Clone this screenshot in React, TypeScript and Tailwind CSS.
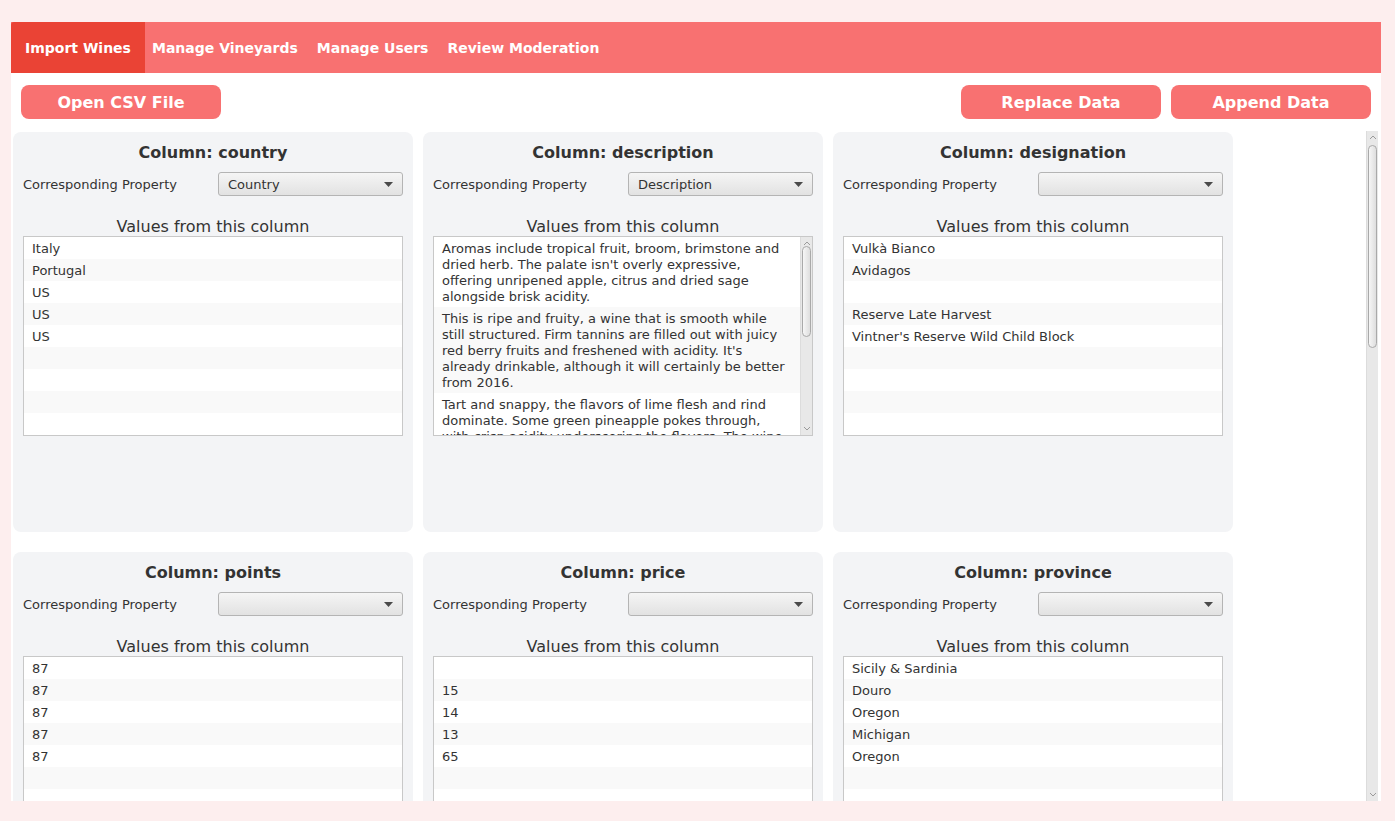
import React from "react";

const TABS = ["Manage Vineyards", "Manage Users", "Review Moderation"];

type Column = {
  name: string;
  property: string;
  values: string[];
  wrap?: boolean;
};

const COLUMNS: Column[] = [
  { name: "country", property: "Country", values: ["Italy", "Portugal", "US", "US", "US"] },
  {
    name: "description",
    property: "Description",
    wrap: true,
    values: [
      "Aromas include tropical fruit, broom, brimstone and dried herb. The palate isn't overly expressive, offering unripened apple, citrus and dried sage alongside brisk acidity.",
      "This is ripe and fruity, a wine that is smooth while still structured. Firm tannins are filled out with juicy red berry fruits and freshened with acidity. It's already drinkable, although it will certainly be better from 2016.",
      "Tart and snappy, the flavors of lime flesh and rind dominate. Some green pineapple pokes through, with crisp acidity underscoring the flavors. The wine was all stainless-steel fermented.",
    ],
  },
  {
    name: "designation",
    property: "",
    values: ["Vulkà Bianco", "Avidagos", "", "Reserve Late Harvest", "Vintner's Reserve Wild Child Block"],
  },
  { name: "points", property: "", values: ["87", "87", "87", "87", "87"] },
  { name: "price", property: "", values: ["", "15", "14", "13", "65"] },
  {
    name: "province",
    property: "",
    values: ["Sicily & Sardinia", "Douro", "Oregon", "Michigan", "Oregon"],
  },
];

const buttonClass =
  "w-[200px] h-[34px] pt-[1px] rounded-lg bg-[#f87171] text-white text-[16px] font-bold";

function ScrollBar({ thumbTop, thumbHeight }: { thumbTop: number; thumbHeight: number }) {
  return (
    <div className="relative w-[12px] h-full shrink-0 bg-[#e8e8e8] border-l border-[#dcdcdc]">
      <svg className="absolute left-[2px] top-[4px]" width="8" height="5" viewBox="0 0 8 5">
        <path d="M1 4 L4 1 L7 4" fill="none" stroke="#9a9a9a" strokeWidth="1" />
      </svg>
      <div
        className="absolute left-[1px] right-[1px] rounded-[5px] border border-[#a9a9a9] bg-linear-to-r from-[#f6f6f6] to-[#dedede]"
        style={{ top: thumbTop, height: thumbHeight }}
      />
      <svg className="absolute left-[2px] bottom-[4px]" width="8" height="5" viewBox="0 0 8 5">
        <path d="M1 1 L4 4 L7 1" fill="none" stroke="#9a9a9a" strokeWidth="1" />
      </svg>
    </div>
  );
}

function Select({ value }: { value: string }) {
  return (
    <div className="w-[185px] h-[24px] rounded-[3px] border border-[#b4b4b4] bg-linear-to-b from-[#f5f5f5] to-[#e2e2e2] flex items-center justify-between pl-[9px] pr-[9px] text-[13px]">
      <span className="pt-[2px]">{value}</span>
      <svg width="9" height="5" viewBox="0 0 9 5">
        <path d="M0 0 H9 L4.5 5 Z" fill="#4a4a4a" />
      </svg>
    </div>
  );
}

function ListBox({ values, wrap }: { values: string[]; wrap?: boolean }) {
  const rows = wrap ? values : [...values, ...Array(9 - values.length).fill("")];
  return (
    <div className="h-[200px] border border-[#c8c8c8] bg-white flex overflow-hidden">
      <div className="flex-1 overflow-hidden">
        {rows.map((v, i) => (
          <div
            key={i}
            className={
              "min-h-[22px] px-[8px] pt-[4px] pb-[2px] text-[13px] leading-[16px] " +
              (wrap ? "" : "whitespace-nowrap ") +
              (i % 2 ? "bg-[#f9f9f9]" : "bg-white")
            }
          >
            {v}
          </div>
        ))}
      </div>
      {wrap && <ScrollBar thumbTop={9} thumbHeight={91} />}
    </div>
  );
}

function ColumnCard({ col }: { col: Column }) {
  return (
    <div className="w-[400px] h-[400px] shrink-0 rounded-lg bg-[#f3f4f6] px-[10px] pt-[11px]">
      <div className="text-center text-[16px] font-bold leading-[20px]">Column: {col.name}</div>
      <div className="mt-[9px] flex items-center justify-between">
        <span className="pt-[2px] text-[13px]">Corresponding Property</span>
        <Select value={col.property} />
      </div>
      <div className="mt-[20px] h-[20px] pt-[1px] text-center text-[16px] leading-[20px]">
        Values from this column
      </div>
      <ListBox values={col.values} wrap={col.wrap} />
    </div>
  );
}

export default function App() {
  return (
    <div className="h-[821px] bg-[#fdeeee] pt-[22px] pl-[11px] pr-[14px] pb-[20px] font-['DejaVu_Sans',sans-serif] text-[#333333]">
      <div className="h-full bg-white flex flex-col overflow-hidden">
        <div className="h-[51px] shrink-0 bg-[#f87171] flex items-stretch pt-[2px] text-[14px] font-bold text-white">
          <div className="-mt-[2px] bg-[#ea4335] rounded-tl-[3px] px-[14px] pt-[2px] flex items-center">
            Import Wines
          </div>
          <div className="flex items-center gap-[19px] pl-[7px]">
            {TABS.map((t) => (
              <span key={t}>{t}</span>
            ))}
          </div>
        </div>

        <div className="h-[58px] shrink-0 flex items-center justify-between pl-[10px] pr-[10px]">
          <button className={buttonClass}>Open CSV File</button>
          <div className="flex gap-[10px]">
            <button className={buttonClass}>Replace Data</button>
            <button className={buttonClass}>Append Data</button>
          </div>
        </div>

        <div className="flex-1 min-h-0 flex pr-[3px]">
          <div className="flex-1 overflow-hidden pl-[2px] pt-[1px]">
            <div className="flex flex-wrap gap-x-[10px] gap-y-[20px] w-[1220px]">
              {COLUMNS.map((c) => (
                <ColumnCard key={c.name} col={c} />
              ))}
            </div>
          </div>
          <ScrollBar thumbTop={14} thumbHeight={203} />
        </div>
      </div>
    </div>
  );
}
